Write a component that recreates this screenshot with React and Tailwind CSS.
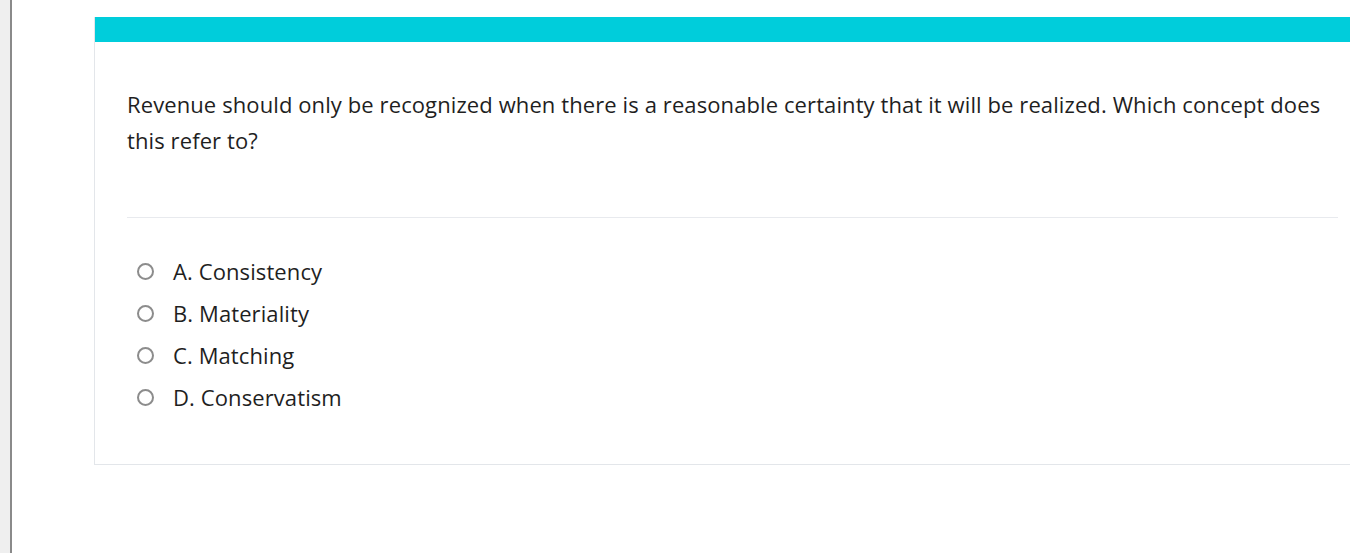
import React from 'react';

const options = ['A. Consistency', 'B. Materiality', 'C. Matching', 'D. Conservatism'];

const App = () => {
  return (
    <div className="flex h-[553px] w-[1350px] overflow-hidden bg-white" style={{ fontFamily: '"Open Sans", "Noto Sans", sans-serif' }}>
      {/* Left window edge */}
      <div className="w-[10px] shrink-0 bg-[#efefef]" />
      <div className="w-[2px] shrink-0 bg-[#8a8a8a]" />

      <div className="flex-1 pl-[82px] pt-[17px]">
        <div className="w-[1270px] border-b border-l border-[#e3e6ea] bg-white">
          <div className="h-[25px] bg-[#00cddb]" />
          <div className="pl-[32px] pr-[12px]">
            <p className="pt-[44px] text-[22px] leading-[36px] tracking-[0.1px] text-[#1f1f1f]">
              Revenue should only be recognized when there is a reasonable certainty that it will be realized. Which concept does this refer to?
            </p>
            <div className="mt-[59px] w-[1211px] border-t border-[#e8eaee]" />
            <div className="flex flex-col gap-[14px] pb-[53px] pl-[10px] pt-[39px]">
              {options.map((opt) => (
                <label key={opt} className="flex h-[28px] items-center gap-[19px] text-[22px] tracking-[0.1px] text-[#1f1f1f]">
                  <span className="block h-[17px] w-[17px] shrink-0 rounded-full border-2 border-[#8c8c8c] bg-white" />
                  {opt}
                </label>
              ))}
            </div>
          </div>
        </div>
      </div>
    </div>
  );
};

export default App;
